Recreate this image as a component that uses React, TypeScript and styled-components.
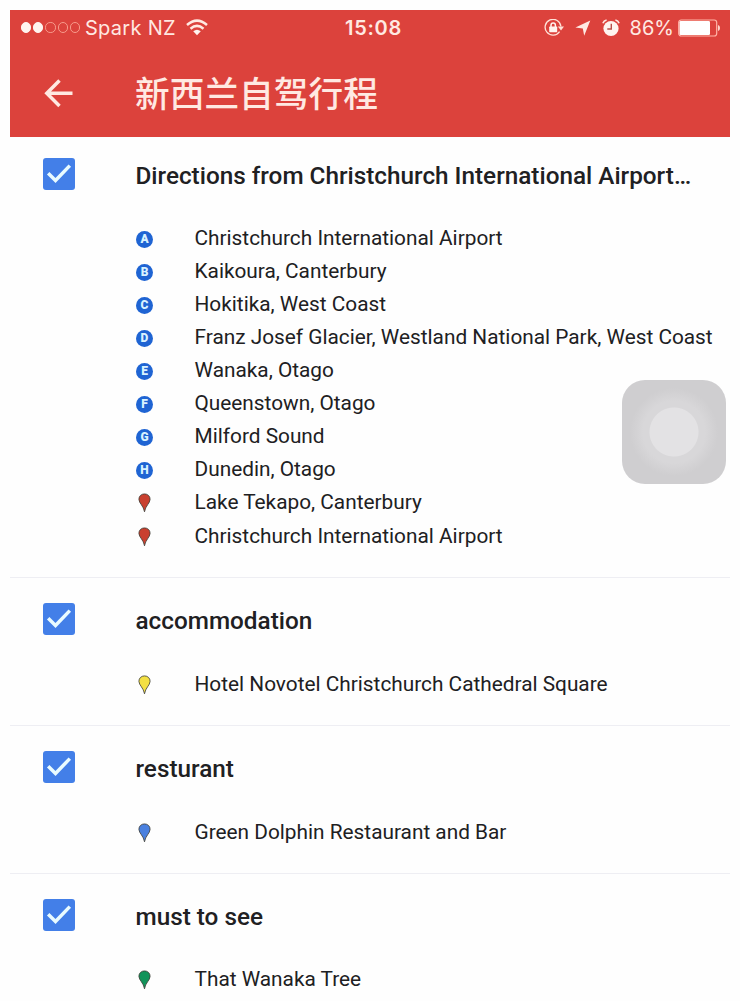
import React from 'react';
import styled, { createGlobalStyle } from 'styled-components';

const GlobalStyle = createGlobalStyle`
  * { box-sizing: border-box; }
  body { margin: 0; background: #fefefe; }
`;

const Page = styled.div`
  position: relative;
  width: 740px;
  height: 1001px;
  padding: 10px 10px 0;
  overflow: hidden;
  background: #fefefe;
  font-family: Roboto, 'Noto Sans CJK SC', sans-serif;
  color: #202022;
`;

const Header = styled.header`
  height: 127px;
  background: #dc423c;
  color: #ffe9e2;
`;

const StatusBar = styled.div`
  display: grid;
  grid-template-columns: 1fr auto 1fr;
  align-items: center;
  height: 36px;
  padding: 0 10px 0 11px;
  font-family: Inter, 'Liberation Sans', sans-serif;
  font-size: 21px;
  line-height: 36px;
  white-space: nowrap;
`;

const StatusGroup = styled.div<{ $end?: boolean }>`
  display: flex;
  align-items: center;
  justify-content: ${p => (p.$end ? 'flex-end' : 'flex-start')};
`;

const Signal = styled.div`
  display: flex;
  gap: 2px;
  margin: 0 5px 1px 0;
`;

const Dot = styled.i<{ $on?: boolean }>`
  width: 10.2px;
  height: 10.2px;
  border-radius: 50%;
  border: 1px solid ${p => (p.$on ? '#fff4ef' : '#f79a8b')};
  background: ${p => (p.$on ? '#fff4ef' : 'transparent')};
`;

const Carrier = styled.span`
  font-size: 20px;
  letter-spacing: 0.3px;
  margin-right: 10px;
`;

const Clock = styled.span`
  font-size: 20px;
  font-weight: 600;
  letter-spacing: 0.7px;
  margin-left: 6px;
`;

const Percent = styled.span`
  font-size: 20px;
  margin: 0 4px 0 10px;
`;

const Icon = styled.svg<{ $gap?: number }>`
  display: block;
  flex: none;
  margin-right: ${p => p.$gap ?? 0}px;
`;

const StatusIcon = styled(Icon)`
  margin-bottom: 1px;
`;

const TitleBar = styled.div`
  display: flex;
  align-items: center;
  height: 94px;
  padding-left: 34px;
`;

const Title = styled.h1`
  margin: 0 0 2px 61px;
  font: 500 34.7px/50px 'Noto Sans CJK SC', sans-serif;
`;

const Section = styled.section<{ $first?: boolean }>`
  height: ${p => (p.$first ? 441 : 148)}px;
  padding-top: ${p => (p.$first ? 21 : 25)}px;
  border-bottom: 1px solid #eeeef3;
`;

const SectionHead = styled.div<{ $gap: number }>`
  display: flex;
  align-items: center;
  height: 32px;
  padding-left: 33px;
  margin-bottom: ${p => p.$gap}px;
`;

const Checkbox = styled.span`
  display: flex;
  width: 32px;
  height: 32px;
  border-radius: 3px;
  background: #437fe8;
`;

const Heading = styled.h2`
  margin: 4px 0 0 60.5px;
  font-size: 24.3px;
  font-weight: 500;
  line-height: 32px;
  white-space: nowrap;
`;

const Places = styled.ul`
  margin: 0;
  padding: 0;
  list-style: none;
`;

const Place = styled.li<{ $late?: boolean }>`
  display: flex;
  align-items: center;
  height: 33px;
  padding-left: 126px;
  margin-top: ${p => (p.$late ? 1 : 0)}px;
`;

const PlaceName = styled.span`
  margin-left: 41.5px;
  font-size: 20.82px;
  line-height: 33px;
  white-space: nowrap;
`;

const Letter = styled.span`
  display: flex;
  align-items: center;
  justify-content: center;
  width: 17px;
  height: 17px;
  margin-top: 2px;
  border-radius: 50%;
  background: #1f64d3;
  color: #d9f2ff;
  font: 900 12px/17px Roboto, sans-serif;
`;

const AssistiveTouch = styled.div`
  position: absolute;
  left: 622px;
  top: 380px;
  width: 104px;
  height: 104px;
  border-radius: 23px;
  background: radial-gradient(circle at 50% 50%, #e3e2e4 0 24px, #d8d7d9 25px 31px, #d3d2d4 38px, #cfced0 44px);
`;

const Pin = ({ color }: { color: string }) => (
  <Icon width="17" height="20" viewBox="0 0 17 20">
    <path
      d="M8.5 .9C5.1 .9 2.9 3.3 2.9 6.3C2.9 10.2 7.6 12.8 8.5 18.8C9.4 12.8 14.1 10.2 14.1 6.3C14.1 3.3 11.9 .9 8.5 .9Z"
      fill={color} stroke="#3c3c35" strokeOpacity="0.8" strokeWidth="1"
    />
  </Icon>
);

const Check = () => (
  <Checkbox>
    <Icon width="32" height="32" viewBox="0 0 32 32">
      <path d="M5.2 15.3L12.5 22.4L26.8 7.6" fill="none" stroke="#e9fbff" strokeWidth="3.5" />
    </Icon>
  </Checkbox>
);

type Stop = { name: string; letter?: string; pin?: string };
type Layer = { title: string; gap: number; stops: Stop[] };

const layers: Layer[] = [
  {
    title: 'Directions from Christchurch International Airport…',
    gap: 32,
    stops: [
      { letter: 'A', name: 'Christchurch International Airport' },
      { letter: 'B', name: 'Kaikoura, Canterbury' },
      { letter: 'C', name: 'Hokitika, West Coast' },
      { letter: 'D', name: 'Franz Josef Glacier, Westland National Park, West Coast' },
      { letter: 'E', name: 'Wanaka, Otago' },
      { letter: 'F', name: 'Queenstown, Otago' },
      { letter: 'G', name: 'Milford Sound' },
      { letter: 'H', name: 'Dunedin, Otago' },
      { pin: '#c9402f', name: 'Lake Tekapo, Canterbury' },
      { pin: '#c9402f', name: 'Christchurch International Airport' },
    ],
  },
  { title: 'accommodation', gap: 33, stops: [{ pin: '#f3e044', name: 'Hotel Novotel Christchurch Cathedral Square' }] },
  { title: 'resturant', gap: 33, stops: [{ pin: '#4a80df', name: 'Green Dolphin Restaurant and Bar' }] },
  { title: 'must to see', gap: 32, stops: [{ pin: '#12935a', name: 'That Wanaka Tree' }] },
];

export default function App() {
  return (
    <Page>
      <GlobalStyle />
      <Header>
        <StatusBar>
          <StatusGroup>
            <Signal><Dot $on /><Dot $on /><Dot /><Dot /><Dot /></Signal>
            <Carrier>Spark NZ</Carrier>
            <StatusIcon width="22" height="17" viewBox="0 0 22 17">
              <g fill="none" stroke="#ffe9e2" strokeWidth="2.5">
                <path d="M1 6Q11 -2.8 21 6" />
                <path d="M4.5 9.7Q11 4 17.5 9.7" />
              </g>
              <path d="M7.2 12.3Q11 9 14.8 12.3L11 16.3Z" fill="#fff4ef" />
            </StatusIcon>
          </StatusGroup>
          <Clock>15:08</Clock>
          <StatusGroup $end>
            <StatusIcon $gap={11} width="20" height="18" viewBox="0 0 20 18">
              <path d="M15.6 12.6A7.9 7.9 0 1 1 16.9 7.5" fill="none" stroke="#ffe1d7" strokeWidth="1.3" />
              <path d="M13.8 7.6H20L17 11.4Z" fill="#ffe1d7" />
              <rect x="5.2" y="7.6" width="8" height="5.6" rx=".6" fill="#fff4ef" />
              <path d="M7 8V6.2a2.2 2.2 0 0 1 4.4 0V8" fill="none" stroke="#fff4ef" strokeWidth="1.5" />
            </StatusIcon>
            <StatusIcon $gap={11} width="16" height="16" viewBox="0 0 16 16">
              <path d="M15.3 .5L9.2 15.8L7.8 8.4L.4 7.4Z" fill="#ffe9e2" />
            </StatusIcon>
            <StatusIcon width="18" height="18" viewBox="0 0 18 18">
              <circle cx="9" cy="9.5" r="7.6" fill="#fff4ef" />
              <path d="M.9 4.3Q1.8 1.6 4.6 1M13.4 1Q16.2 1.6 17.1 4.3" fill="none" stroke="#ffe9e2" strokeWidth="1.6" />
              <path d="M9.3 4.8V10H5.3" fill="none" stroke="#b9504a" strokeWidth="1.4" />
            </StatusIcon>
            <Percent>86%</Percent>
            <StatusIcon width="42" height="18" viewBox="0 0 42 18">
              <rect x=".7" y="1" width="38" height="16" rx="2.5" fill="none" stroke="#ffb5a8" strokeWidth="1.2" />
              <rect x="1.5" y="2" width="30.5" height="14" rx="1.2" fill="#fff" />
              <path d="M40 6Q42 6.3 42 9T40 12Z" fill="#ffd6cb" />
            </StatusIcon>
          </StatusGroup>
        </StatusBar>
        <TitleBar>
          <Icon width="30" height="30" viewBox="0 0 30 30">
            <path d="M28.5 15.3H3M15.5 2.6L2.8 15.3L15.5 28" fill="none" stroke="#ffe9e2" strokeWidth="3.5" />
          </Icon>
          <Title>新西兰自驾行程</Title>
        </TitleBar>
      </Header>
      {layers.map((layer, i) => (
        <Section key={layer.title} $first={i === 0}>
          <SectionHead $gap={layer.gap}>
            <Check />
            <Heading>{layer.title}</Heading>
          </SectionHead>
          <Places>
            {layer.stops.map((s, n) => (
              <Place key={n} $late={n === 9}>
                {s.letter ? <Letter>{s.letter}</Letter> : <Pin color={s.pin!} />}
                <PlaceName>{s.name}</PlaceName>
              </Place>
            ))}
          </Places>
        </Section>
      ))}
      <AssistiveTouch />
    </Page>
  );
}
